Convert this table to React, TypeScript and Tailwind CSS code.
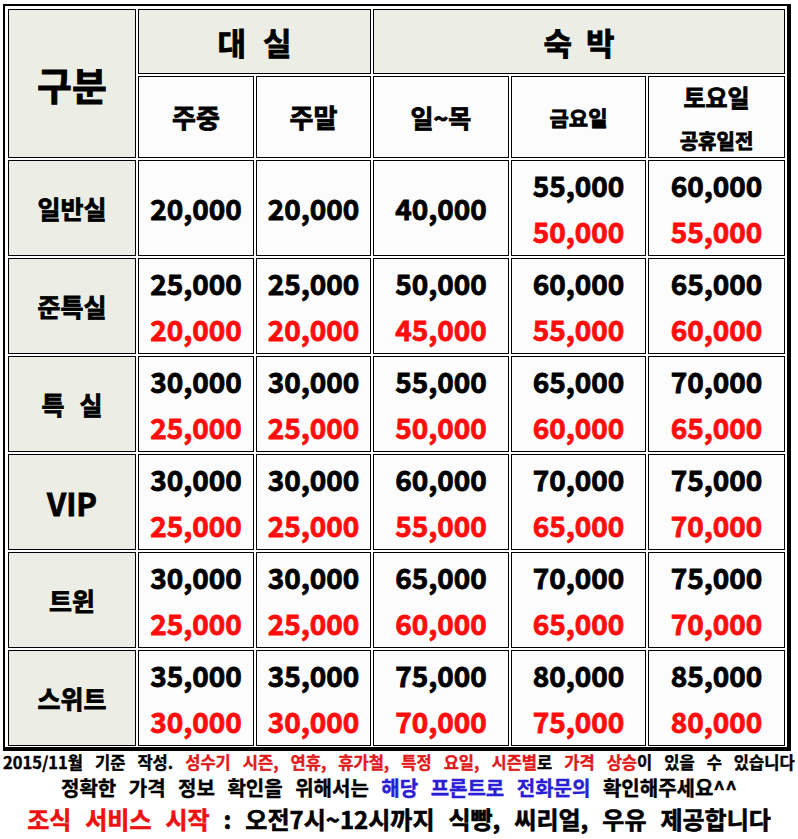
import React from "react";

type Row = { label: string; vals: string[][]; big?: boolean };

const rows: Row[] = [
  { label: "일반실", vals: [["20,000"], ["20,000"], ["40,000"], ["55,000", "50,000"], ["60,000", "55,000"]] },
  { label: "준특실", vals: [["25,000", "20,000"], ["25,000", "20,000"], ["50,000", "45,000"], ["60,000", "55,000"], ["65,000", "60,000"]] },
  { label: "특 실", vals: [["30,000", "25,000"], ["30,000", "25,000"], ["55,000", "50,000"], ["65,000", "60,000"], ["70,000", "65,000"]] },
  { label: "VIP", big: true, vals: [["30,000", "25,000"], ["30,000", "25,000"], ["60,000", "55,000"], ["70,000", "65,000"], ["75,000", "70,000"]] },
  { label: "트윈", vals: [["30,000", "25,000"], ["30,000", "25,000"], ["65,000", "60,000"], ["70,000", "65,000"], ["75,000", "70,000"]] },
  { label: "스위트", vals: [["35,000", "30,000"], ["35,000", "30,000"], ["75,000", "70,000"], ["80,000", "75,000"], ["85,000", "80,000"]] },
];

const head = "border border-black bg-[#eceee5] flex items-center justify-center text-black [-webkit-text-stroke:0.8px]";
const data = "border border-black bg-[#fcfcfc] flex flex-col items-center justify-center [-webkit-text-stroke:0.8px]";

export default function App() {
  return (
    <div className="w-[798px] h-[839px] bg-white font-['Noto_Sans_CJK_KR','Noto_Sans',sans-serif] font-bold text-black overflow-hidden">
      <div className="ml-[3px] mt-[4px] w-[788px] border-l-2 border-t-2 border-r-4 border-b-4 border-black pl-[3px] pt-[3px] pr-[2px] pb-[1px]">
        <div className="grid grid-cols-[128px_116px_115px_136px_135px_137px] grid-rows-[65px_82px_repeat(6,96px)] gap-[2px]">
          <div className={`${head} row-span-2 text-[38px] leading-none`}>구분</div>
          <div className={`${head} col-span-2 text-[31px] leading-none gap-[17px]`}>
            <span>대</span>
            <span>실</span>
          </div>
          <div className={`${head} col-span-3 text-[31px] leading-none gap-[14px]`}>
            <span>숙</span>
            <span>박</span>
          </div>
          <div className={`${data} text-[26px] leading-none`}>주중</div>
          <div className={`${data} text-[26px] leading-none`}>주말</div>
          <div className={`${data} text-[25px] leading-none`}>일~목</div>
          <div className={`${data} text-[21px] leading-none`}>금요일</div>
          <div className={`${data} leading-none gap-[22px] pt-[2px]`}>
            <span className="text-[24px]">토요일</span>
            <span className="text-[20px]">공휴일전</span>
          </div>
          {rows.map((r) => (
            <React.Fragment key={r.label}>
              <div className={`${head} ${r.big ? "text-[31px]" : "text-[25px]"} leading-none whitespace-pre`}>
                {r.label === "특 실" ? (
                  <span className="flex gap-[15px]">
                    <span>특</span>
                    <span>실</span>
                  </span>
                ) : (
                  r.label
                )}
              </div>
              {r.vals.map((v, i) => (
                <div key={i} className={`${data} text-[28px] leading-[46px]`}>
                  <span className="text-black">{v[0]}</span>
                  {v[1] && <span className="text-[#ff0d0d]">{v[1]}</span>}
                </div>
              ))}
            </React.Fragment>
          ))}
        </div>
      </div>
      <div className="mt-[1px] pl-[3px] text-[16.5px] leading-[20px] whitespace-nowrap [word-spacing:8.3px] [-webkit-text-stroke:0.4px]">
        <span>2015/11월 기준 작성. </span>
        <span className="text-[#e01b1b]">성수기 시즌, 연휴, 휴가철, 특정 요일, 시즌별</span>
        <span>로 </span>
        <span className="text-[#e01b1b]">가격 상승</span>
        <span>이 있을 수 있습니다</span>
      </div>
      <div className="mt-[3px] text-center text-[20px] leading-[26px] whitespace-nowrap [word-spacing:8px] [-webkit-text-stroke:0.4px]">
        <span>정확한 가격 정보 확인을 위해서는 </span>
        <span className="text-[#2a1ed6]">해당 프론트로 전화문의</span>
        <span> 확인해주세요^^</span>
      </div>
      <div className="mt-[2px] text-center text-[24px] leading-[32px] whitespace-nowrap [word-spacing:8.5px] [-webkit-text-stroke:0.6px]">
        <span className="text-[#ee1111]">조식 서비스 시작</span>
        <span> : 오전7시~12시까지 식빵, 씨리얼, 우유 제공합니다</span>
      </div>
    </div>
  );
}
